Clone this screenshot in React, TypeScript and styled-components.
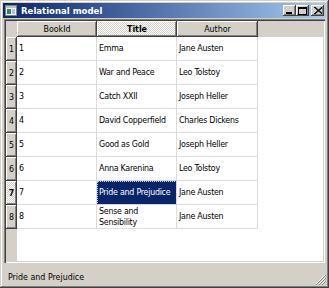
import React from 'react';
import styled, { createGlobalStyle } from 'styled-components';

const GlobalStyle = createGlobalStyle`
  html, body {
    margin: 0;
    padding: 0;
    background: #ffffff;
  }
  * {
    box-sizing: border-box;
  }
`;

const FONT = `"DejaVu Sans Condensed", "Liberation Sans", sans-serif`;
const FACE = '#d4d0c8';
const DITHER = `repeating-conic-gradient(#ffffff 0 25%, ${FACE} 0 50%) 0 0 / 2px 2px`;

const books = [
  { id: 1, title: 'Emma', author: 'Jane Austen' },
  { id: 2, title: 'War and Peace', author: 'Leo Tolstoy' },
  { id: 3, title: 'Catch XXII', author: 'Joseph Heller' },
  { id: 4, title: 'David Copperfield', author: 'Charles Dickens' },
  { id: 5, title: 'Good as Gold', author: 'Joseph Heller' },
  { id: 6, title: 'Anna Karenina', author: 'Leo Tolstoy' },
  { id: 7, title: 'Pride and Prejudice', author: 'Jane Austen' },
  { id: 8, title: 'Sense and Sensibility', author: 'Jane Austen' },
];

const selectedRow = 7;

const Window = styled.div`
  width: 329px;
  height: 288px;
  display: flex;
  flex-direction: column;
  padding: 3px;
  background: ${FACE};
  box-shadow: inset -1px -1px #404040, inset 1px 1px ${FACE},
    inset -2px -2px #808080, inset 2px 2px #ffffff;
  font-family: ${FONT};
  font-size: 8.8px;
  color: #000;
`;

const TitleBar = styled.div`
  height: 15px;
  display: flex;
  align-items: center;
  padding: 0 2px 0 2px;
  gap: 4px;
  background: linear-gradient(to right, #0a246a, #a6caf0);
`;

const TitleText = styled.span`
  flex: 1;
  color: #ffffff;
  font-weight: bold;
  font-size: 9.5px;
  white-space: nowrap;
`;

const CaptionButtons = styled.div`
  display: flex;
  align-items: center;
`;

const CaptionButton = styled.div<{ $gap?: boolean }>`
  width: 13px;
  height: 11px;
  margin-left: ${p => (p.$gap ? '2px' : '0')};
  display: flex;
  align-items: center;
  justify-content: center;
  background: ${FACE};
  box-shadow: inset -1px -1px #404040, inset 1px 1px #ffffff,
    inset -2px -2px #808080;
`;

const Client = styled.div`
  flex: 1;
  display: flex;
  flex-direction: column;
  padding: 1px 0 0 1px;
  min-height: 0;
`;

const TableFrame = styled.div`
  height: 244px;
  width: 321px;
  padding: 2px;
  display: flex;
  flex-direction: column;
  box-shadow: inset 1px 1px #808080, inset 2px 2px #404040,
    inset -1px -1px #ffffff, inset -2px -2px ${FACE};
  background: #ffffff;
`;

const Grid = styled.div`
  flex: 1;
  display: grid;
  grid-template-columns: 11px 80px 80px 81px 1fr;
  grid-template-rows: 16px repeat(8, 24px) 1fr;
`;

const Corner = styled.div`
  background: ${FACE};
`;

const HeaderSection = styled.div<{ $active?: boolean }>`
  display: flex;
  align-items: center;
  justify-content: center;
  background: ${p => (p.$active ? DITHER : FACE)};
  font-weight: ${p => (p.$active ? 'bold' : 'normal')};
  box-shadow: inset -1px -1px #404040, inset 1px 1px #ffffff,
    inset -2px -2px #808080;
  padding-bottom: 1px;
`;

const HeaderFill = styled.div`
  background: ${FACE};
`;

const RowHeader = styled.div<{ $active?: boolean }>`
  display: flex;
  align-items: center;
  justify-content: center;
  background: ${p => (p.$active ? DITHER : FACE)};
  font-weight: ${p => (p.$active ? 'bold' : 'normal')};
  box-shadow: inset -1px -1px #404040, inset 1px 1px #ffffff,
    inset -2px -2px #808080;
`;

const Cell = styled.div<{ $selected?: boolean }>`
  display: flex;
  align-items: center;
  padding: 0 1px 0 2px;
  line-height: 11px;
  letter-spacing: -0.25px;
  border-right: 1px solid #dcdcdc;
  border-bottom: 1px solid #dcdcdc;
  background: ${p => (p.$selected ? '#0a246a' : '#ffffff')};
  color: ${p => (p.$selected ? '#ffffff' : '#000000')};
  outline: ${p => (p.$selected ? '1px dotted #d4d0c8' : 'none')};
  outline-offset: -1px;
  overflow: hidden;
`;

const RowFill = styled.div`
  background: #ffffff;
`;

const HeaderGap = styled.div`
  background: ${FACE};
`;

const BottomFill = styled.div`
  grid-column: 2 / span 4;
  background: #ffffff;
`;

const StatusBar = styled.div`
  flex: 1;
  display: flex;
  align-items: center;
  justify-content: space-between;
  padding: 5px 0 0 4px;
`;

const Grip = styled.svg`
  align-self: flex-end;
`;

const App: React.FC = () => {
  return (
    <>
      <GlobalStyle />
      <Window>
        <TitleBar>
          <svg width="12" height="11" viewBox="0 0 12 11">
            <rect x="0.5" y="0.5" width="11" height="10" fill="#f0f0f0" stroke="#808080" />
            <rect x="1" y="1" width="10" height="2" fill="#c0c0c0" />
            <rect x="2" y="4" width="4" height="5" fill="#2e8b57" />
            <rect x="7" y="4" width="3" height="5" fill="#b0c4de" />
          </svg>
          <TitleText>Relational model</TitleText>
          <CaptionButtons>
            <CaptionButton>
              <svg width="7" height="7" viewBox="0 0 7 7">
                <rect x="0" y="5" width="6" height="2" fill="#000" />
              </svg>
            </CaptionButton>
            <CaptionButton>
              <svg width="9" height="8" viewBox="0 0 9 8">
                <rect x="0.5" y="0.5" width="8" height="7" fill="none" stroke="#000" />
                <rect x="0" y="0" width="9" height="2" fill="#000" />
              </svg>
            </CaptionButton>
            <CaptionButton $gap>
              <svg width="8" height="7" viewBox="0 0 8 7">
                <path d="M0 0 L8 7 M1 0 L9 7 M8 0 L0 7 M9 0 L1 7" stroke="#000" strokeWidth="1" />
              </svg>
            </CaptionButton>
          </CaptionButtons>
        </TitleBar>
        <Client>
          <TableFrame>
            <Grid>
              <Corner />
              <HeaderSection>BookId</HeaderSection>
              <HeaderSection $active>Title</HeaderSection>
              <HeaderSection>Author</HeaderSection>
              <HeaderGap />
              {books.map(b => (
                <React.Fragment key={b.id}>
                  <RowHeader $active={b.id === selectedRow}>{b.id}</RowHeader>
                  <Cell>{b.id}</Cell>
                  <Cell $selected={b.id === selectedRow}>{b.title}</Cell>
                  <Cell>{b.author}</Cell>
                  <RowFill />
                </React.Fragment>
              ))}
              <HeaderFill />
              <BottomFill />
            </Grid>
          </TableFrame>
          <StatusBar>
            <span>Pride and Prejudice</span>
            <Grip width="11" height="11" viewBox="0 0 11 11">
              <path d="M10 1 L1 10 M10 4 L4 10 M10 7 L7 10" stroke="#ffffff" strokeWidth="1" />
              <path d="M11 1 L1 11 M11 4 L4 11 M11 7 L7 11" stroke="#808080" strokeWidth="1" />
            </Grip>
          </StatusBar>
        </Client>
      </Window>
    </>
  );
};

export default App;
